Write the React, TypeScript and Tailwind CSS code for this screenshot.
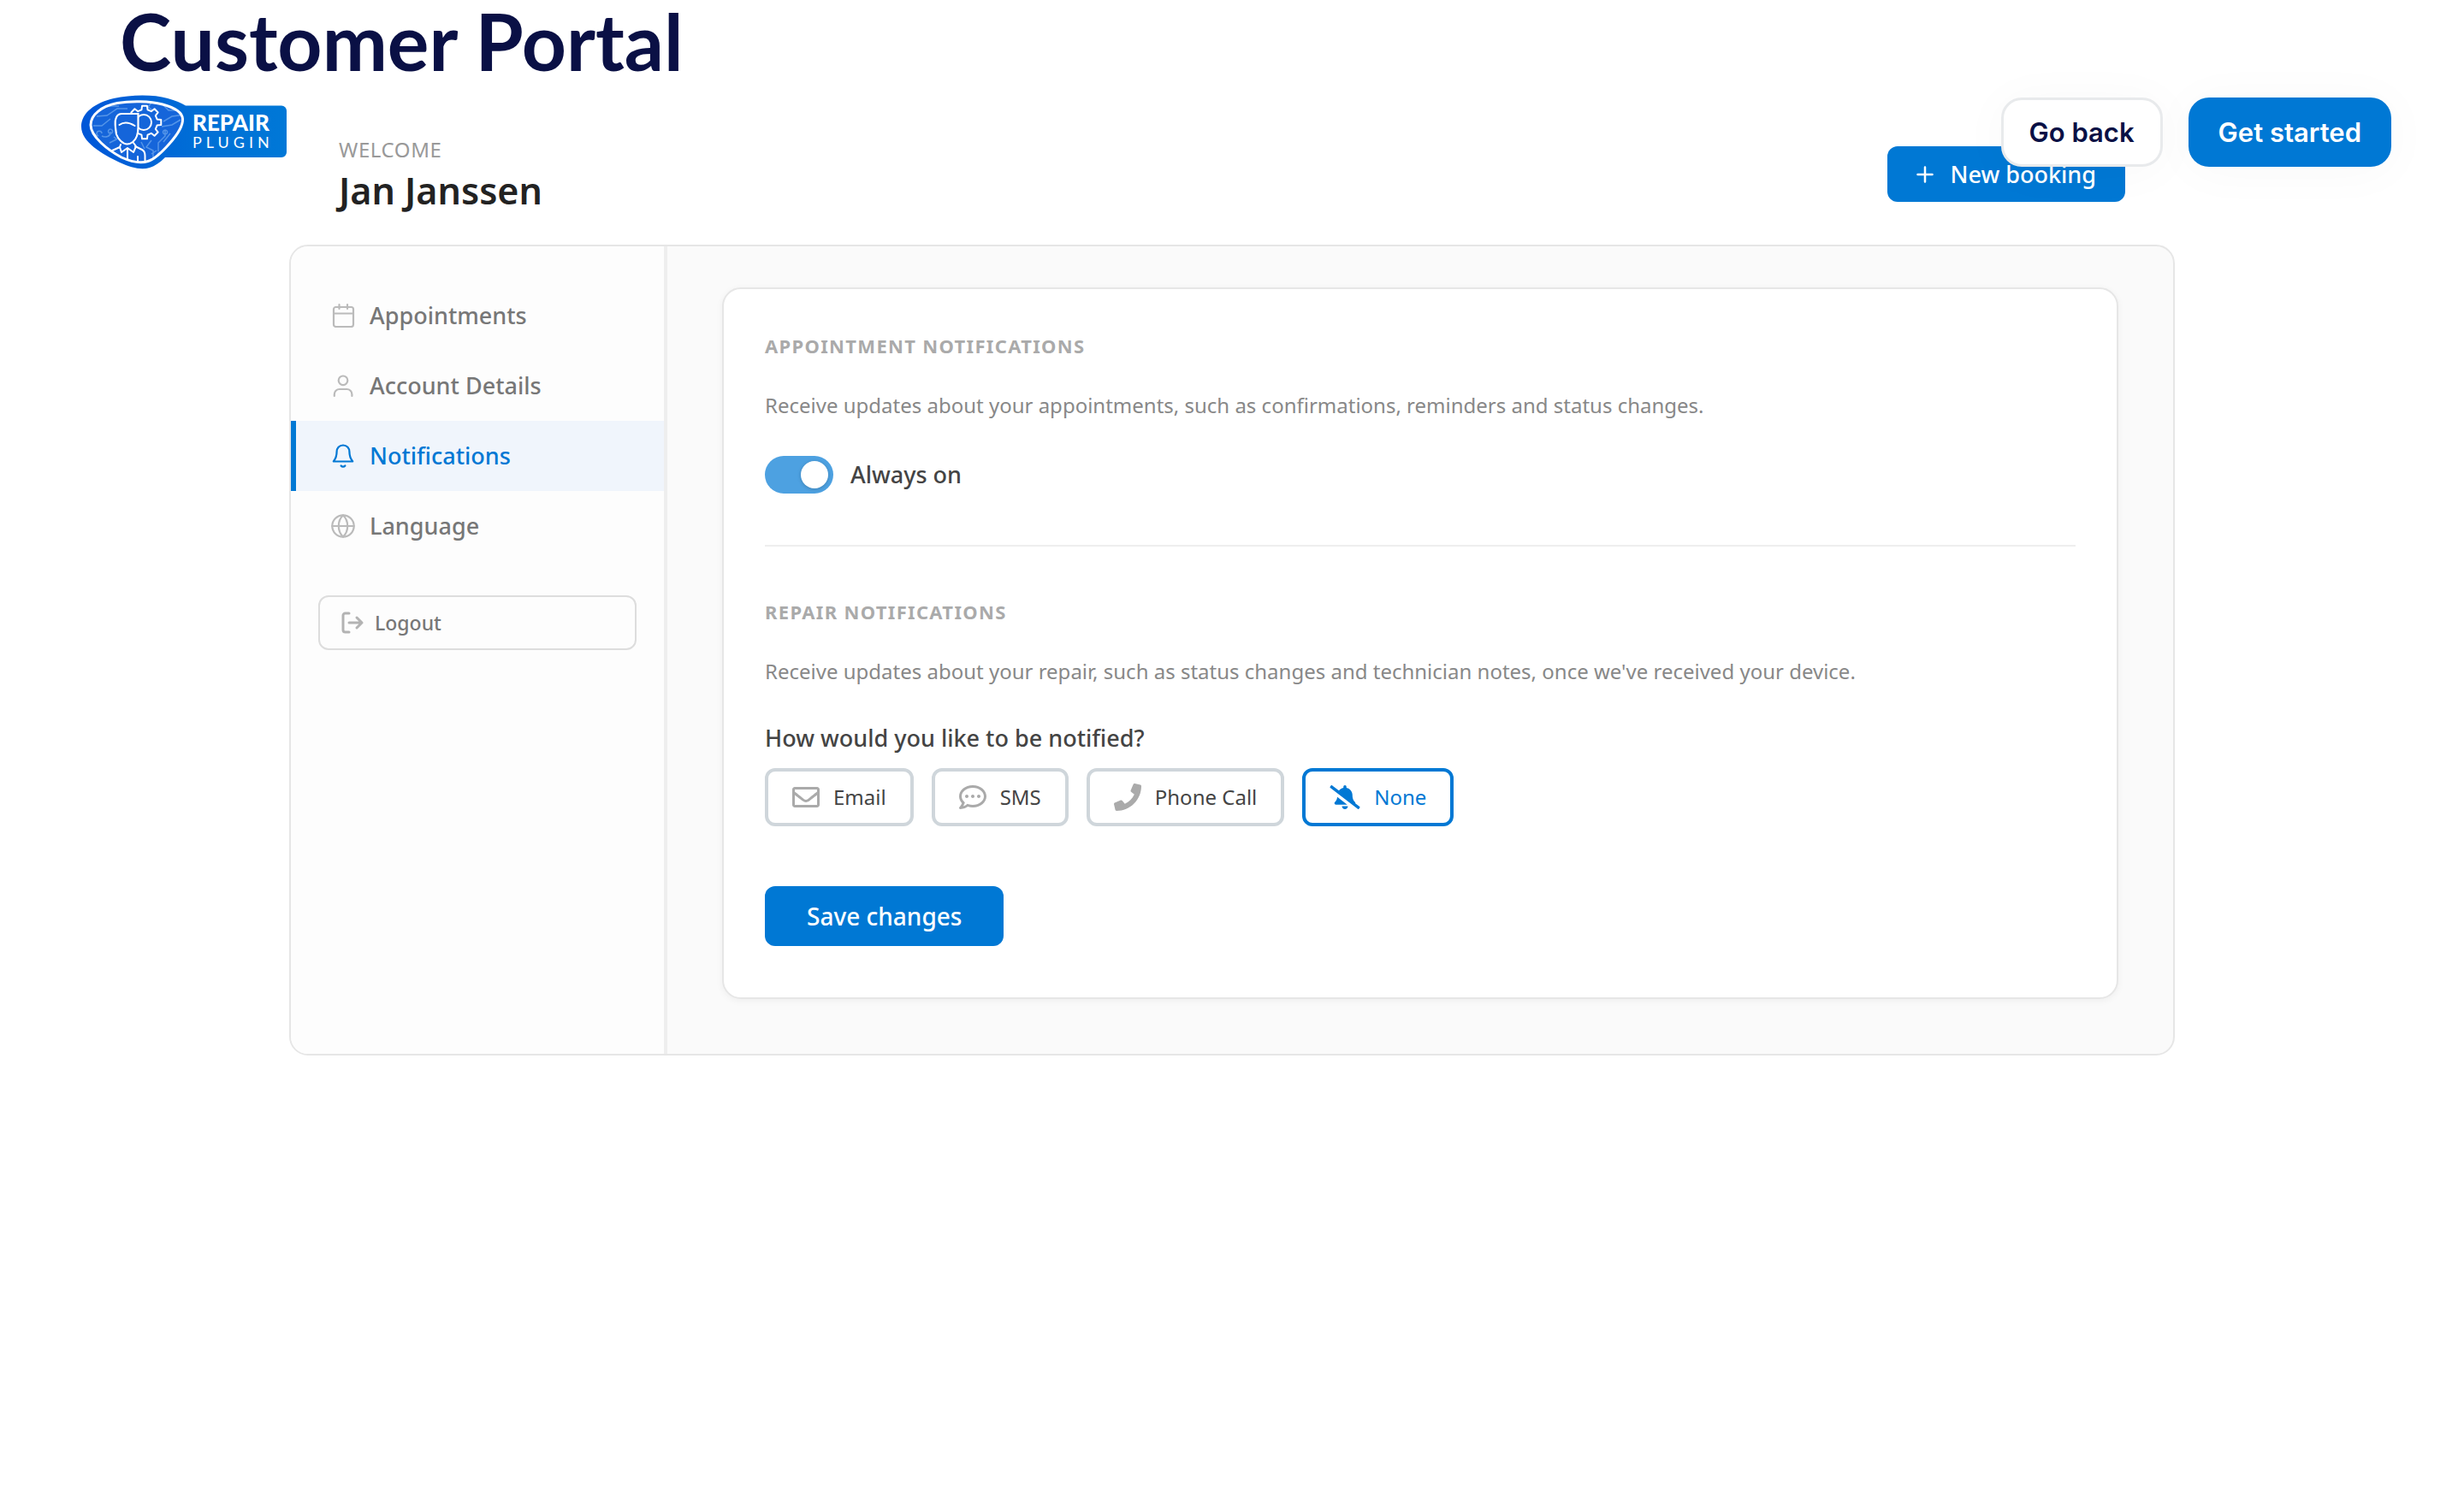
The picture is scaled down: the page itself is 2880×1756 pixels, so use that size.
import { useState, type ReactNode } from 'react';
import { FaBellSlash, FaPhone, FaRegCommentDots, FaRegEnvelope } from 'react-icons/fa';

function LineIcon({ children }: { children: ReactNode }) {
  return (
    <svg viewBox="0 0 28 28" className="size-7 shrink-0" fill="none" stroke="currentColor" strokeWidth="2.2" strokeLinecap="round" strokeLinejoin="round" aria-hidden="true">
      {children}
    </svg>
  );
}

const navItems = [
  {
    label: 'Appointments',
    icon: (
      <LineIcon>
        <rect x="3" y="4" width="23" height="23" rx="2.5" />
        <path d="M3 11.5h23M9.5 1.2V6M19 1.2V6" />
      </LineIcon>
    ),
  },
  {
    label: 'Account Details',
    icon: (
      <LineIcon>
        <circle cx="14" cy="7.8" r="5.3" />
        <path d="M3.8 26v-2a6 6 0 0 1 6-6h8.6a6 6 0 0 1 6 6v2" />
      </LineIcon>
    ),
  },
  {
    label: 'Notifications',
    icon: (
      <LineIcon>
        <path d="M14 1.5c-4.6 0-7.4 3.4-7.4 7.6 0 5.4-1 8-3.8 11.4h22.4C22.4 17.1 21.4 14.5 21.4 9.1c0-4.2-2.8-7.6-7.4-7.6z" />
        <path d="M11.6 25.5c1.3 1.5 3.5 1.5 4.8 0" />
      </LineIcon>
    ),
  },
  {
    label: 'Language',
    icon: (
      <LineIcon>
        <circle cx="14" cy="14" r="12.7" />
        <path d="M1.3 14h25.4M14 1.3c3.5 3.5 5.2 8 5.2 12.7s-1.7 9.2-5.2 12.7c-3.5-3.5-5.2-8-5.2-12.7s1.7-9.2 5.2-12.7z" />
      </LineIcon>
    ),
  },
];

const channels = [
  { label: 'Email', icon: <FaRegEnvelope className="size-8" /> },
  { label: 'SMS', icon: <FaRegCommentDots className="size-8" /> },
  { label: 'Phone Call', icon: <FaPhone className="size-8" /> },
  { label: 'None', icon: <FaBellSlash className="h-7 w-9" /> },
];

/** Outline of a cog with eight teeth, centred on cx, cy. */
function gearPath(cx: number, cy: number, inner: number, outer: number) {
  const points: string[] = [];
  for (let i = 0; i < 8; i++) {
    const mid = (i * Math.PI) / 4;
    for (const [r, a] of [[inner, -0.24], [outer, -0.15], [outer, 0.15], [inner, 0.24]]) {
      points.push(`${(cx + r * Math.cos(mid + a)).toFixed(2)} ${(cy + r * Math.sin(mid + a)).toFixed(2)}`);
    }
  }
  return `M${points.join('L')}Z`;
}

const pick = 'M11 36C11 24 24 14 42 10.5C58 7.8 80 8 95 12C110 16 118 21 118.5 29C119 38 111 49 103 58C96 66 86 76 78 78.5C70 81 58 79 47 74C32 66 11 50 11 36Z';

function Logo() {
  return (
    <svg viewBox="0 0 240 88" className="h-[88px] w-[240px]" role="img" aria-label="Repair Plugin">
      <defs>
        <linearGradient id="badge" x1="0" y1="0" x2="1" y2="0">
          <stop offset="0" stopColor="#0056d8" />
          <stop offset="0.6" stopColor="#0070d6" />
          <stop offset="1" stopColor="#0078d7" />
        </linearGradient>
        <clipPath id="pick"><path d={pick} /></clipPath>
      </defs>
      <path
        fill="url(#badge)"
        d="M0 38C0 22 16 10 38 5C58 .5 84 0 101 5C110 7.5 117 10.5 122 13.5H234a6 6 0 0 1 6 6V68a6 6 0 0 1-6 6H98C92 80 86 84 80 86C70 89 58 86 45 80C24 70 0 56 0 38Z"
      />
      <g clipPath="url(#pick)">
        <path d={pick} fill="#1565da" />
        <g fill="none" stroke="#5595e8" strokeWidth="1.5">
          <path d="M14 37h10l10-8M18 26l12-1 12-8h12M30 14h14M84 8l-6 7 8 6M92 9l10 10h14M96 32l10-6 14-2M94 38l12-2 10-6M24 46a3 3 0 1 0-4 3M24 49c4 2 11 1 10-5M34 41a2.5 2.500 0 1 0 .1 0M33 57l8-4M38 50l4 3M98 42v7l-8 8v10M98 47a2.5 2.5 0 1 1 .1 0M82 54l-6 8 8 4v12M92 68a2.5 2.5 0 1 1-.1 0M70 56l4 8M82 70l6-4M104 46l-8 10" />
        </g>
        <path d={gearPath(74, 33, 15, 19.5)} fill="#1565da" stroke="#fff" strokeWidth="2" strokeLinejoin="round" />
        <circle cx="73" cy="33" r="9" fill="#1565da" stroke="#fff" strokeWidth="2" />
        <path d="M42 80V63L60 56l14 9v15z" fill="#1565da" />
        <path d="M41 47C40 40 39 34 40 30c1-4.5 3-7 7-7h19.500v16c0 4-.5 7-1.5 10-2 6-7 9.5-11.5 9.5S43 53 41 47Z" fill="#1565da" stroke="#fff" strokeWidth="2.2" />
        <g fill="none" stroke="#fff" strokeWidth="2" strokeLinecap="round" strokeLinejoin="round">
          <path d="M44.5 36c4-3 10-4 18 1M46 59l-1 3-11 5M45 62l2 6 7-5 7 5 3-7-3-4M54 64v16M63 61l8 4c3 1.5 3.5 4 3.5 7v8M66 73v6" />
        </g>
      </g>
      <path d={pick} fill="none" stroke="#fff" strokeWidth="3" />
      <text x="130" y="43" fill="#fff" fontFamily="Lato, sans-serif" fontWeight="900" fontSize="26">REPAIR</text>
      <text x="130" y="63" fill="#fff" fontFamily="Lato, sans-serif" fontSize="18" letterSpacing="5">PLUGIN</text>
    </svg>
  );
}

export default function App() {
  const [channel, setChannel] = useState('None');

  return (
    <div className="relative min-h-screen bg-white font-['Noto_Sans',sans-serif]">
      <header className="absolute inset-x-0 top-[110px] z-10 flex items-start justify-between pr-[85px] pl-[95px]">
        <a href="#home"><Logo /></a>
        <div className="flex gap-[30px] pt-1 font-['Inter',sans-serif] text-[31px] leading-9 font-semibold">
          <button type="button" className="h-[81px] rounded-3xl border-3 border-[#e8eaec] bg-white px-[30px] text-[#0a1045] shadow-[0_4px_60px_rgba(0,0,0,0.03)]">Go back</button>
          <button type="button" className="h-[81px] rounded-3xl bg-[#0078d4] px-[35px] text-white shadow-[0_4px_60px_rgba(0,0,0,0.03)]">Get started</button>
        </div>
      </header>

      <h1 className="pl-[140px] font-['Lato',sans-serif] text-[91px] leading-[96px] font-bold text-[#0a1045]">Customer Portal</h1>

      <main className="mx-auto max-w-[2204px]">
        <div className="flex items-start justify-between px-[58px] pt-[63px] pb-[35px]">
          <div>
            <p className="text-2xl leading-8 tracking-wide text-[#999999]">WELCOME</p>
            <h2 className="mt-1 text-[43px] leading-14 font-semibold text-[#222222]">Jan Janssen</h2>
          </div>
          <button type="button" className="mt-3 flex h-[65px] items-center gap-[19px] rounded-xl bg-[#0078d4] px-[34px] text-[27px] leading-9 font-medium text-white">
            <svg viewBox="0 0 20 20" className="size-5" fill="none" stroke="currentColor" strokeWidth="2.5" strokeLinecap="round" aria-hidden="true">
              <path d="M10 1.5v17M1.5 10h17" />
            </svg>
            New booking
          </button>
        </div>

        <div className="flex overflow-hidden rounded-[22px] border-2 border-[#e6e6e6] bg-[#fafafa]">
          <aside className="w-[440px] shrink-0 border-r-4 border-[#eeeeee] bg-[#fdfdfd] pt-10">
            <nav>
              {navItems.map(({ label, icon }) =>
                label === 'Notifications' ? (
                  <a key={label} href="#notifications" aria-current="page" className="flex h-[82px] items-center gap-[17px] border-l-6 border-[#0078d4] bg-[#f0f5fc] pl-[41px] text-[27px] leading-9 font-medium text-[#0078d4]">
                    {icon}
                    {label}
                  </a>
                ) : (
                  <a key={label} href="#section" className="flex h-[82px] items-center gap-[17px] border-l-6 border-transparent pl-[41px] text-[27px] leading-9 font-medium text-[#777777]">
                    <span className="text-[#bbbbbb]">{icon}</span>
                    {label}
                  </a>
                ),
              )}
            </nav>
            <div className="px-8 pt-10">
              <button type="button" className="flex h-16 w-full items-center gap-3 rounded-xl border-2 border-[#dddddd] px-6 text-[23px] leading-8 font-medium text-[#777777]">
                <svg viewBox="0 0 28 28" className="size-7 text-[#b3b3b3]" fill="none" stroke="currentColor" strokeWidth="3" strokeLinecap="round" strokeLinejoin="round" aria-hidden="true">
                  <path d="M10 3H5.5A2.5 2.5 0 0 0 3 5.5v17A2.5 2.5 0 0 0 5.5 25H10M10 14h15M19 8l6 6-6 6" />
                </svg>
                Logout
              </button>
            </div>
          </aside>

          <div className="flex-1 px-16 pt-12 pb-16">
            <section className="rounded-[22px] border-2 border-[#e6e6e6] bg-white px-12 pt-[51px] pb-15 shadow-[0_2px_8px_rgba(0,0,0,0.05)]">
              <h3 className="text-[22px] leading-[30px] font-bold tracking-[0.06em] text-[#aaaaaa]">APPOINTMENT NOTIFICATIONS</h3>
              <p className="mt-[39px] text-2xl leading-8 text-[#888888]">
                Receive updates about your appointments, such as confirmations, reminders and status changes.
              </p>
              <label className="mt-[43px] flex h-11 items-center gap-5 text-[27px] leading-9 font-medium text-[#444444]">
                <input
                  type="checkbox"
                  role="switch"
                  defaultChecked
                  className="flex h-11 w-20 appearance-none items-center rounded-full bg-[#cccccc] px-1.5 before:size-8 before:rounded-full before:bg-white before:shadow-[0_1px_4px_rgba(0,0,0,0.2)] checked:justify-end checked:bg-[#4da1e1]"
                />
                Always on
              </label>
              <hr className="mt-15 border-t-2 border-[#eeeeee]" />

              <h3 className="mt-[61px] text-[22px] leading-[30px] font-bold tracking-[0.06em] text-[#aaaaaa]">REPAIR NOTIFICATIONS</h3>
              <p className="mt-[39px] text-2xl leading-8 text-[#888888]">
                Receive updates about your repair, such as status changes and technician notes, once we've received your device.
              </p>
              <fieldset className="mt-11">
                <legend className="text-[27px] leading-9 font-medium text-[#444444]">How would you like to be notified?</legend>
                <div className="mt-[17px] flex flex-wrap gap-[21px]">
                  {channels.map(({ label, icon }) => (
                    <label key={label} className="relative flex h-[68px] items-center gap-4 rounded-xl border-4 border-[#cfd6db] px-7 text-2xl leading-8 text-[#444444] has-checked:border-[#0078d4] has-checked:text-[#0078d4]">
                      <input type="radio" name="channel" value={label} checked={channel === label} onChange={() => setChannel(label)} className="peer sr-only" />
                      <span className="text-[#aaaaaa] peer-checked:text-[#0078d4]">{icon}</span>
                      {label}
                    </label>
                  ))}
                </div>
              </fieldset>
              <button type="button" className="mt-[70px] h-[70px] rounded-xl bg-[#0078d4] px-[49px] text-[28px] leading-10 font-medium text-white">Save changes</button>
            </section>
          </div>
        </div>
      </main>
    </div>
  );
}
